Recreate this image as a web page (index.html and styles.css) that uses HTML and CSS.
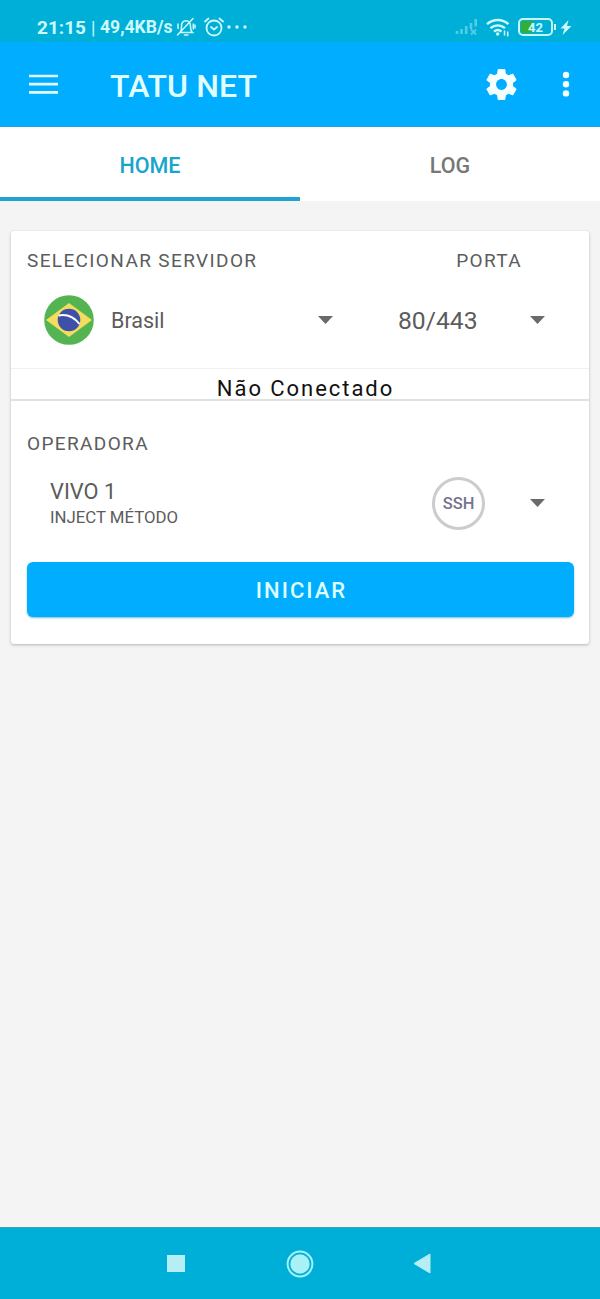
FILE: index.html
```html
<!DOCTYPE html>
<html lang="pt-BR">
<head>
<meta charset="utf-8">
<title>TATU NET</title>
<link rel="stylesheet" href="styles.css">
</head>
<body>
<div class="screen">
  <header class="status">
    <span class="clock">21:15</span><span class="sep">|</span><span class="speed">49,4KB/s</span>
    <svg class="bell" width="20" height="20" viewBox="0 0 20 20" fill="none" stroke="currentColor" stroke-width="1.500" stroke-linecap="round"><path d="M4 15.500h12.500c-2-1.600-2-3-2-6C14.500 6 12.700 3.800 10 3.800S5.500 6 5.500 9.500c0 3 0 4.400-1.500 6M8.500 18h3.500M1.500 18 17 1.500M2 7v4.500M17.300 7v5M19 8v3"/></svg>
    <svg class="alarm" width="20" height="20" viewBox="0 0 20 20" fill="none" stroke="currentColor" stroke-width="1.800" stroke-linecap="round" stroke-linejoin="round"><circle cx="10" cy="11" r="7.500"/><path d="M1 4.500 4.500 1.500M19 4.500l-3.500-3M7 10l3 2.700 3-2.700"/></svg>
    <svg class="more" width="20" height="4" viewBox="0 0 20 4" fill="currentColor"><circle cx="2" cy="2" r="1.700"/><circle cx="10" cy="2" r="1.700"/><circle cx="18" cy="2" r="1.700"/></svg>
    <svg class="signal" width="23" height="18" viewBox="0 0 23 18" stroke="currentColor" stroke-width="2.600" fill="none"><path d="M2 16v-3M6.500 16v-5M11.200 16V8M16 11V5M20.700 8.500V1"/><path d="m16 11.500 5 5m0-5-5 5" stroke-width="2"/></svg>
    <svg class="wifi" width="24" height="19" viewBox="0 0 24 19" fill="none" stroke="currentColor" stroke-width="2.300"><path d="M1 6.200c6-5.600 15.500-5.600 21.500 0M4.500 10.200c4.200-3.800 10.300-3.800 14.500 0M8 13.700c2.300-2 5.300-2 7.500 0"/><circle cx="11.700" cy="16" r="1.700" fill="currentColor" stroke="none"/><path d="M18.500 12.500v5M21.700 13.500v5" stroke-width="1.500"/></svg>
    <span class="battery"><span class="level">42</span></span><i class="tip"></i>
    <svg class="bolt" width="12" height="17" viewBox="0 0 12 17" fill="currentColor"><path d="M8.500 1 .5 9.500h4L2.500 16 11.500 7H7z"/></svg>
  </header>
  <div class="appbar">
    <svg class="menu" width="29" height="21" viewBox="0 0 29 21" stroke="currentColor" stroke-width="2.700"><path d="M0 2h29M0 10.200h29M0 18.400h29"/></svg>
    <h1 class="title">TATU NET</h1>
    <svg class="gear" width="37" height="37" viewBox="0 0 24 24" fill="currentColor"><path d="M19.430 12.980c.04-.32.07-.64.07-.98s-.03-.66-.07-.98l2.110-1.650c.19-.15.240-.42.120-.64l-2-3.460c-.12-.22-.39-.3-.61-.22l-2.490 1c-.52-.4-1.080-.73-1.690-.98l-.38-2.650C14.460 2.180 14.250 2 14 2h-4c-.25 0-.46.18-.49.42l-.38 2.650c-.61.250-1.170.590-1.690.98l-2.490-1c-.23-.09-.49 0-.61.22l-2 3.460c-.13.220-.07.490.12.640l2.110 1.650c-.04.320-.07.650-.07.980s.03.660.07.980l-2.110 1.650c-.19.150-.24.420-.12.640l2 3.460c.12.220.39.300.61.220l2.490-1c.52.400 1.080.730 1.690.98l.38 2.650c.03.240.24.420.49.420h4c.25 0 .46-.18.49-.42l.38-2.650c.61-.25 1.170-.59 1.690-.98l2.490 1c.23.090.49 0 .61-.22l2-3.460c.12-.22.070-.49-.12-.64l-2.110-1.650zM12 15.500c-1.930 0-3.500-1.570-3.500-3.500s1.570-3.500 3.500-3.500 3.500 1.570 3.500 3.500-1.570 3.500-3.500 3.500z"/></svg>
    <svg class="dots" width="8" height="28" viewBox="0 0 8 28" fill="currentColor"><circle cx="4" cy="5" r="3.200"/><circle cx="4" cy="14.200" r="3.200"/><circle cx="4" cy="23.400" r="3.200"/></svg>
  </div>
  <nav class="tabs"><span class="tab active">HOME</span><span class="tab">LOG</span></nav>
  <main class="card">
    <section class="server">
      <div class="labels"><span class="label">SELECIONAR SERVIDOR</span><span class="label port-label">PORTA</span></div>
      <div class="picks">
        <svg class="flag" width="50" height="50" viewBox="0 0 50 50"><circle cx="25" cy="25" r="24.800" fill="#55b452"/><path d="M2 25 25 8l23 17-23 17z" fill="#f4dc5c"/><circle cx="25" cy="25" r="11.300" fill="#3e50a8"/><path d="M14.500 20.500c8-1.500 15.500 1.500 21 8.500" fill="none" stroke="#fff" stroke-width="2"/></svg>
        <span class="country">Brasil</span>
        <svg class="arrow" width="15" height="8" viewBox="0 0 15 8"><path d="M0 0h15L7.500 8z"/></svg>
        <span class="port">80/443</span>
        <svg class="arrow port-arrow" width="15" height="8" viewBox="0 0 15 8"><path d="M0 0h15L7.500 8z"/></svg>
      </div>
    </section>
    <div class="state"><span class="state-text">Não Conectado</span></div>
    <section class="operator">
      <span class="label">OPERADORA</span>
      <div class="method">
        <div class="names"><span class="name">VIVO 1</span><span class="kind">INJECT MÉTODO</span></div>
        <span class="ssh">SSH</span>
        <svg class="arrow" width="15" height="8" viewBox="0 0 15 8"><path d="M0 0h15L7.500 8z"/></svg>
      </div>
      <button class="start">INICIAR</button>
    </section>
  </main>
  <footer class="navbar">
    <svg class="recent" width="18" height="17" viewBox="0 0 18 17"><path d="M0 0h18v17H0z" fill="currentColor"/></svg>
    <svg class="home" width="28" height="28" viewBox="0 0 28 28"><circle cx="14" cy="14" r="12.400" fill="none" stroke="currentColor" stroke-width="2"/><circle cx="14" cy="14" r="9.700" fill="currentColor"/></svg>
    <svg class="back" width="18" height="21" viewBox="0 0 18 21"><path d="M1 10.500 17 1v19z" fill="currentColor" stroke="currentColor" stroke-linejoin="round"/></svg>
  </footer>
</div>
</body>
</html>
```

FILE: styles.css
```css
* { box-sizing: border-box; }
body { margin: 0; font-family: Roboto, "Liberation Sans", sans-serif; background: #f4f4f4; color: #5c5c5c; }
svg { display: block; flex: none; }
span { white-space: nowrap; }
.screen { width: 600px; height: 1299px; display: flex; flex-direction: column; }
.status { height: 42px; padding: 12px 28px 0 37px; background: #00afd7; color: #ccfafd; display: flex; align-items: center; font-size: 18px; font-weight: 700; }
.status > * { flex: none; }
.clock { width: 50px; font-size: 19px; }
.sep { width: 13px; padding-left: 4px; font-weight: 400; }
.speed { width: 76px; font-size: 17.6px; }
.alarm { margin-left: 8px; }
.more { margin-left: 3px; }
.signal { margin-left: auto; opacity: .4; }
.wifi { margin-left: 8px; }
.battery { width: 35px; height: 18px; margin-left: 8px; padding: 1px; border: 2px solid #c4f7fb; border-radius: 5px; display: flex; }
.level { flex: 1; border-radius: 2px; background: linear-gradient(90deg, #35ae35 0 40%, transparent 40%); font-size: 13px; line-height: 13px; text-align: center; }
.tip { width: 2px; height: 6px; background: #c4f7fb; margin: 0 4px 0 1px; }
.appbar { height: 85px; padding: 0 30px 0 29px; background: #00adff; color: #e2ffff; display: flex; align-items: center; border-bottom: 1px solid #209fdc; }
.title { margin: 4px auto 0 52px; font-size: 32px; font-weight: 500; line-height: 38px; letter-spacing: .1px; }
.gear { margin: 1px 42px 0 0; color: #f4ffff; }
.dots { color: #f4ffff; }
.tabs { height: 74px; display: grid; grid-template-columns: 1fr 1fr; background: #fff; }
.tab { display: flex; align-items: center; justify-content: center; padding-top: 7px; border-bottom: 4px solid transparent; font-size: 21.5px; font-weight: 500; color: #777; }
.active { color: #18a5cb; border-color: #20a3cf; }
.card { margin: 30px 11px 0; height: 413px; background: #fff; border-radius: 3px; box-shadow: 0 1px 3px #0004; display: flex; flex-direction: column; }
.server { height: 137px; padding: 18px 16px 0; }
.label { font-size: 19px; line-height: 23px; letter-spacing: 1.37px; }
.labels { display: flex; justify-content: space-between; }
.port-label { margin-right: 51px; }
.picks { display: flex; align-items: center; height: 50px; margin-top: 23px; padding-left: 17px; }
.country { width: 207px; margin-left: 17px; font-size: 21.5px; padding-top: 1px; }
.arrow { fill: #6a6a6a; }
.port { width: 132px; margin-left: 65px; font-size: 24.7px; }
.state { height: 33px; border-top: 1px solid #f0f0f0; border-bottom: 2px solid #e0e0e0; display: flex; justify-content: center; padding: 6px 0 0 11px; color: #111; }
.state-text { font-size: 22px; line-height: 27px; letter-spacing: 1.95px; }
.operator { padding: 31px 16px 0; display: flex; flex-direction: column; }
.method { height: 54px; margin-top: 21px; padding: 0 28px 0 23px; display: flex; align-items: center; }
.names { display: flex; flex-direction: column; margin-right: auto; padding-top: 2px; }
.name { font-size: 21.8px; line-height: 26px; }
.kind { font-size: 16.8px; line-height: 25px; }
.ssh { width: 53px; height: 53px; border: 3px solid #ccc; border-radius: 50%; display: flex; align-items: center; justify-content: center; margin-right: 45px; font-size: 16.5px; font-weight: 500; color: #77738f; }
.start { height: 55px; width: 547px; margin-top: 32px; border: 0; border-radius: 6px; background: #00adff; box-shadow: 0 1px 2px #0088aa88; color: #dcffff; font: 500 22px Roboto, sans-serif; letter-spacing: 2px; padding: 2px 0 0 2px; }
.navbar { height: 72px; margin-top: auto; border-top: 1px solid #3b9fb9; background: #00afd7; color: #b5eef5; display: flex; align-items: center; padding-left: 167px; }
.home { margin-left: 101px; color: #a8f1f7; }
.back { margin-left: 99px; }
```
